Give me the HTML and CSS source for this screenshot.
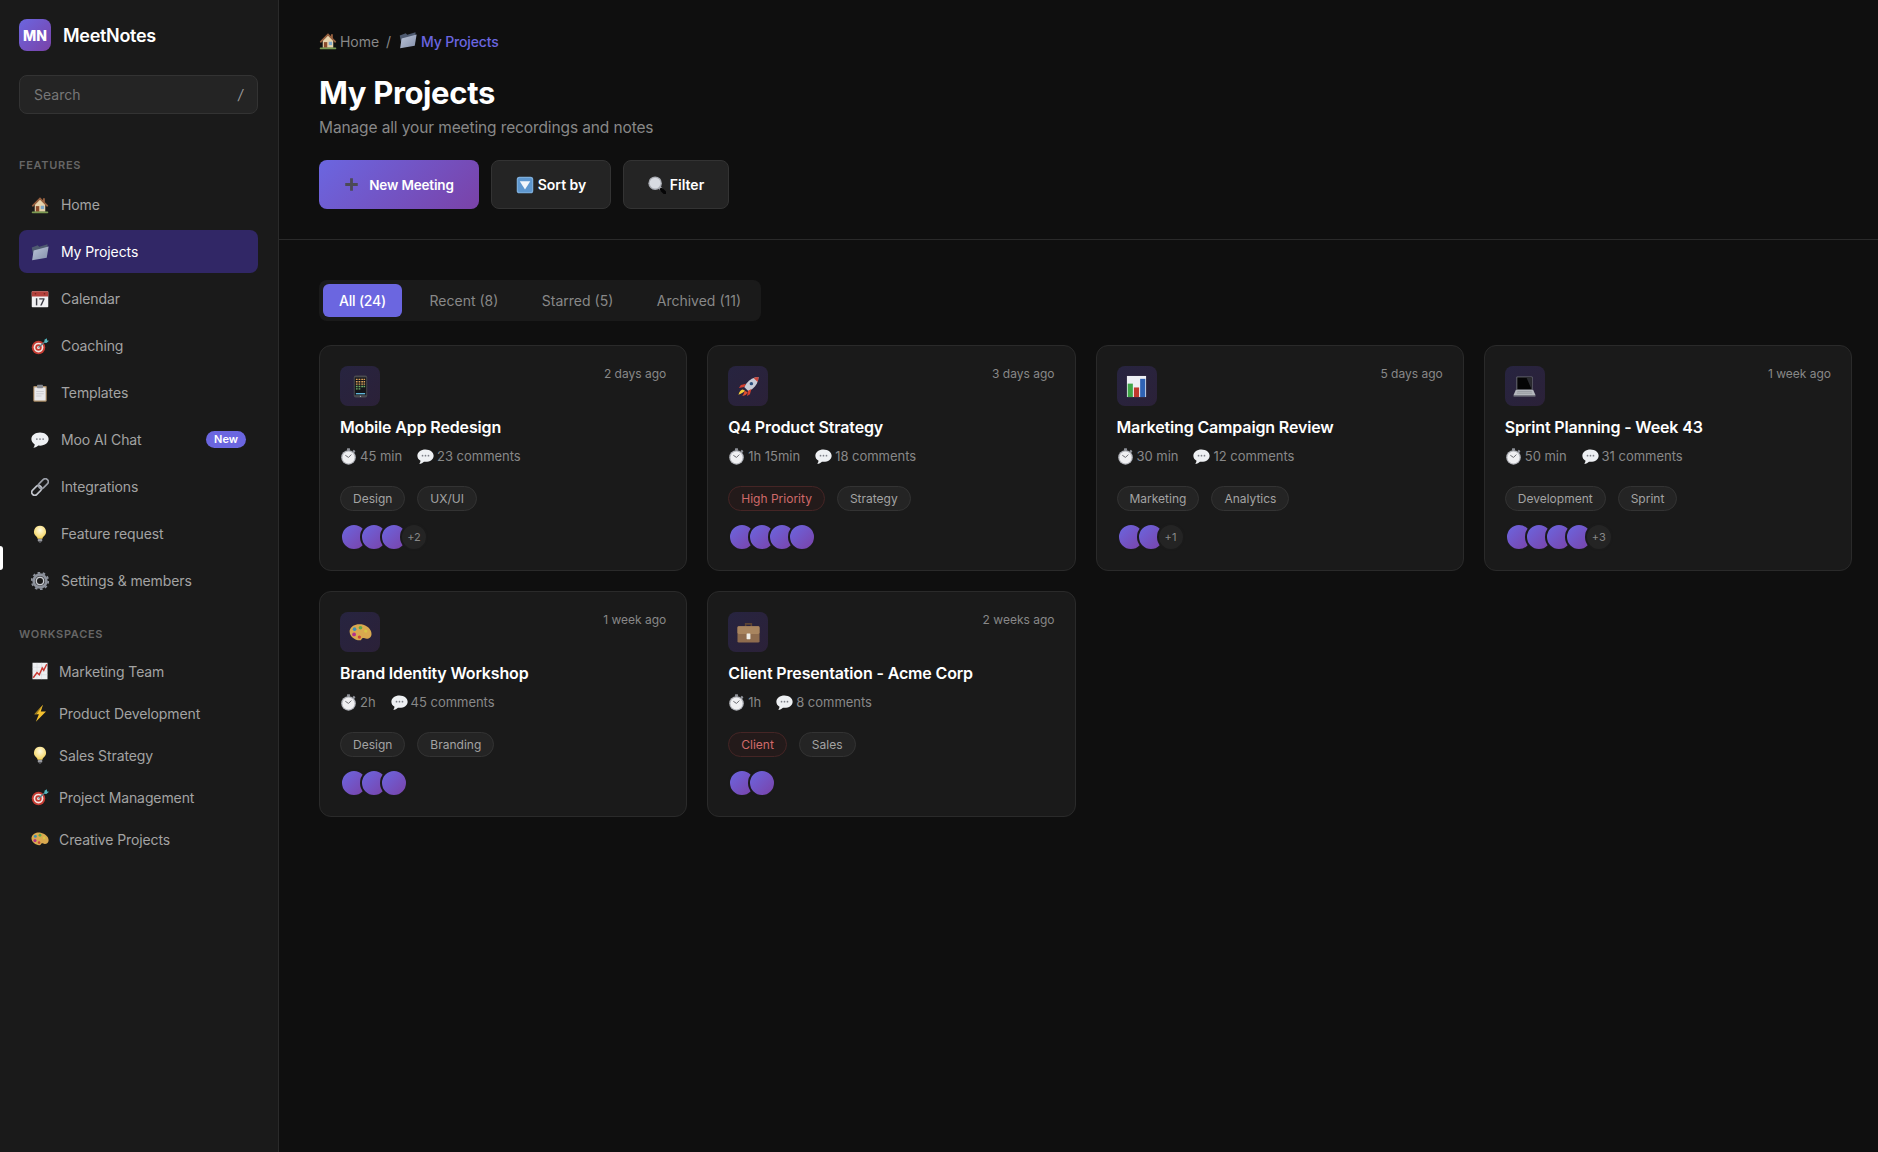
FILE: index.html
```html
<!DOCTYPE html>
<html lang="en">
<head>
    <meta charset="UTF-8">
    <meta name="viewport" content="width=device-width, initial-scale=1.0">
    <title>MeetNotes - My Projects</title>
    <link rel="stylesheet" href="styles.css">
</head>
<body>
    <!-- emoji style icons, reused with <use> -->
    <svg class="icon-defs" xmlns="http://www.w3.org/2000/svg">
        <defs>
            <linearGradient id="folderFront" x1="0" y1="0" x2="1" y2="1">
                <stop offset="0" stop-color="#bcc5d8"/>
                <stop offset="1" stop-color="#8490ab"/>
            </linearGradient>
            <radialGradient id="bulbGlow" cx="0.5" cy="0.35" r="0.6">
                <stop offset="0" stop-color="#fffbe0"/>
                <stop offset="1" stop-color="#f5d563"/>
            </radialGradient>
        </defs>
        <symbol id="i-home" viewBox="0 0 24 24">
            <path d="M5 11 12 4l7 7v10H5z" fill="#e6d3ac"/>
            <path d="M12 1.500 1 12.500 2.500 14.500 12 5l9.500 9.500 1.500-2z" fill="#96603f"/>
            <rect x="16" y="3" width="2.500" height="5" fill="#96603f"/>
            <rect x="6.500" y="13.500" width="4.500" height="7.500" fill="#8a4a2b"/>
            <rect x="13" y="13" width="4.500" height="4.500" fill="#7ea7c8"/>
            <rect x="1" y="20.500" width="22" height="2.500" rx="1" fill="#7c9a52"/>
        </symbol>
        <symbol id="i-folder" viewBox="0 0 24 24">
            <path d="M1 6 9 3l2 2 11-3.500V7L4 22z" fill="#4e5a70"/>
            <path d="M3.500 10 23.500 4.500 21 19.500 1.500 23z" fill="url(#folderFront)"/>
        </symbol>
        <symbol id="i-calendar" viewBox="0 0 24 24">
            <rect x="1" y="1.500" width="22" height="21.500" rx="1" fill="#f1f1f3"/>
            <path d="M1 2.500a1 1 0 0 1 1-1h20a1 1 0 0 1 1 1V8.500H1z" fill="#b3413c"/>
            <circle cx="6" cy="5" r="1.100" fill="#6e2320"/>
            <circle cx="18" cy="5" r="1.100" fill="#6e2320"/>
            <rect x="6.500" y="11" width="1.900" height="9.500" fill="#3c3c44"/>
            <path d="M11 11h7v1.700L14.300 20.500h-2.100l3.800-7.800h-5z" fill="#3c3c44"/>
        </symbol>
        <symbol id="i-target" viewBox="0 0 24 24">
            <circle cx="10" cy="14" r="9" fill="#c43b32"/>
            <circle cx="10" cy="14" r="6.500" fill="#f3e7e3"/>
            <circle cx="10" cy="14" r="4.300" fill="#c43b32"/>
            <circle cx="10" cy="14" r="2" fill="#f3e7e3"/>
            <path d="M10 14 20 5" stroke="#4d7f88" stroke-width="1.500"/>
            <path d="M18 3.500 21 1.500l.5 3L24 5 20.500 8l-2.500-.5z" fill="#55b5bd"/>
        </symbol>
        <symbol id="i-clipboard" viewBox="0 0 24 24">
            <rect x="3" y="2.500" width="18" height="21" rx="1.500" fill="#a88a63"/>
            <rect x="4.500" y="4.500" width="15" height="17.500" fill="#e9e9ec"/>
            <rect x="8" y="1" width="8" height="4.500" rx="1" fill="#85888f"/>
            <path d="M7 10h10M7 13h10M7 16h7" stroke="#c4c4ca" stroke-width="1"/>
        </symbol>
        <symbol id="i-chat" viewBox="0 0 24 24">
            <path d="M12 2C5.500 2 .5 5.800 .5 10.800c0 3 1.700 5.500 4.500 7.100-.1 1.500-.7 3.100-1.800 4.400 2.700-.2 5-1.400 6.600-3 .7.100 1.400.2 2.200.2 6.500 0 11.500-3.800 11.500-8.700S18.500 2 12 2z" fill="#eef0f3"/>
            <circle cx="7.800" cy="10.800" r="1.200" fill="#7c7f87"/>
            <circle cx="12" cy="10.800" r="1.200" fill="#7c7f87"/>
            <circle cx="16.200" cy="10.800" r="1.200" fill="#7c7f87"/>
        </symbol>
        <symbol id="i-link" viewBox="0 0 24 24">
            <rect x="0" y="12.500" width="15" height="8" rx="4" transform="rotate(-45 7.500 16.500)" fill="none" stroke="#c2c5cc" stroke-width="2.200"/>
            <rect x="9" y="3.500" width="15" height="8" rx="4" transform="rotate(-45 16.500 7.500)" fill="none" stroke="#9a9ea7" stroke-width="2.200"/>
        </symbol>
        <symbol id="i-bulb" viewBox="0 0 24 24">
            <path d="M12 1a8 8 0 0 0-4.800 14.400c1 .9 1.400 2 1.600 3h6.400c.2-1 .6-2.100 1.600-3A8 8 0 0 0 12 1z" fill="url(#bulbGlow)"/>
            <rect x="9" y="18.500" width="6" height="3.500" rx="1" fill="#9a9ba1"/>
            <rect x="10.500" y="22" width="3" height="1.500" rx=".7" fill="#5e5f65"/>
        </symbol>
        <symbol id="i-gear" viewBox="0 0 24 24">
            <circle cx="12" cy="12" r="8.500" fill="none" stroke="#8d929c" stroke-width="3.500"/>
            <circle cx="12" cy="12" r="11" fill="none" stroke="#8d929c" stroke-width="2.500" stroke-dasharray="3.400 3.500"/>
            <circle cx="12" cy="12" r="5" fill="none" stroke="#c6c9cf" stroke-width="2"/>
        </symbol>
        <symbol id="i-trend" viewBox="0 0 24 24">
            <rect x="2" y="1" width="20" height="22" fill="#eff0f2"/>
            <path d="M2 7h20M2 12h20M2 17h20M8 1v22M14 1v22" stroke="#d0d3d8" stroke-width=".6"/>
            <path d="M3 21l5-7 3 3 4-9 2 3 4-8" fill="none" stroke="#c9362f" stroke-width="1.900"/>
        </symbol>
        <symbol id="i-bolt" viewBox="0 0 24 24">
            <path d="M16 1 4.500 13.500h6L6.500 23.500 20 10h-7z" fill="#f3c02f"/>
            <path d="M16 1 4.500 13.500h3z" fill="#9c7a1c"/>
        </symbol>
        <symbol id="i-palette" viewBox="0 0 24 24">
            <path d="M.8 9.500C2 5 7.500 2.500 13 3.500s10.500 5 10.500 10c0 2.800-2.200 5-5 5-2.200 0-2.800-1.100-4.500-.6-1.100.4-.6 2.300-2.800 2.300C5.500 20.200-.4 15 .8 9.500z" fill="#d9a94f"/>
            <circle cx="5.800" cy="8.500" r="1.900" fill="#3f8fb5"/>
            <circle cx="12" cy="7" r="1.900" fill="#5ea84b"/>
            <circle cx="17.500" cy="10.500" r="1.700" fill="#d8c545"/>
            <circle cx="5.300" cy="14" r="2" fill="#b32f8b"/>
            <circle cx="10.800" cy="16.800" r="1.700" fill="#c9453b"/>
        </symbol>
        <symbol id="i-phone" viewBox="0 0 24 24">
            <rect x="5" y=".5" width="14" height="23" rx="2" fill="#4a4b50"/>
            <rect x="6" y="2.500" width="12" height="18.500" fill="#15161a"/>
            <path d="M7.200 4.500h1.800M10 4.500h1.800M12.800 4.500h1.800M15.200 4.500h1.600M7.200 7h1.800M10 7h1.800M12.800 7h1.800M15.200 7h1.600M7.200 9.500h1.800M10 9.500h1.800M12.800 9.500h1.800M15.200 9.500h1.600" stroke="#d9a05a" stroke-width="1.400"/>
            <path d="M7.200 12h1.800M10 12h1.800M12.800 12h1.800M15.200 12h1.600M7.200 14.500h1.800M10 14.500h1.800" stroke="#72b36b" stroke-width="1.400"/>
            <path d="M7.200 19.500h9.600" stroke="#5fb5d9" stroke-width="1.400"/>
            <circle cx="12" cy="22.300" r=".7" fill="#b5b6bb"/>
        </symbol>
        <symbol id="i-rocket" viewBox="0 0 24 24">
            <path d="M22.500 2c-5 .2-9.500 2.500-12.500 6.500l-2.500 4 4.500 4.500 4-2.500C20 11.500 22.300 7 22.500 2z" fill="#c7cbd6"/>
            <path d="M22.500 2c-1.800.1-3.500.4-5.200 1l4.200 4.200c.6-1.700.9-3.400 1-5.200z" fill="#c9453b"/>
            <circle cx="15" cy="9" r="1.800" fill="#2c4f7c"/>
            <path d="M9.500 9 4 10.500l-2 3 5.500-1zM15 14.500 13.500 20l-3 2 1-5.500z" fill="#d5402f"/>
            <path d="M6 15c-2 .5-3.500 2-4.500 5.500C5 19.500 7 18 8.500 16.500z" fill="#f6cf3c"/>
            <path d="M8 16.500c-.5 2-1 3.500-2.500 5.500 3-.5 5-2 5.500-4z" fill="#e0512f"/>
        </symbol>
        <symbol id="i-bars" viewBox="0 0 24 24">
            <rect x="2" y="1" width="20" height="22" fill="#eef0f5"/>
            <rect x="2.800" y="9" width="5.400" height="14" fill="#3fa648"/>
            <rect x="9.300" y="13" width="5.400" height="10" fill="#c03a2e"/>
            <rect x="15.800" y="4" width="5.400" height="19" fill="#2f63b5"/>
        </symbol>
        <symbol id="i-laptop" viewBox="0 0 24 24">
            <rect x="3.500" y="1.500" width="17" height="14" rx="1" fill="#6a6c72"/>
            <rect x="4.500" y="2.500" width="15" height="12.500" fill="#050506"/>
            <path d="M14 2.500h5.500V15z" fill="#2a2b30"/>
            <path d="M3 15.500h18l2.500 5.500H.5z" fill="#b4b7bd"/>
            <rect x=".5" y="21" width="23" height="1.500" rx=".7" fill="#85888f"/>
            <path d="M4.500 17.300h15M4 19h16" stroke="#85888f" stroke-width=".6"/>
        </symbol>
        <symbol id="i-case" viewBox="0 0 24 24">
            <path d="M9 6.500V3h6v3.500" fill="none" stroke="#5d4433" stroke-width="1.600"/>
            <rect x=".5" y="5.500" width="23" height="17" rx="1.500" fill="#8f6c4e"/>
            <rect x=".5" y="5.500" width="23" height="8" rx="1.500" fill="#a9855f"/>
            <rect x="10" y="13" width="4" height="6" rx=".5" fill="#f0eee8"/>
        </symbol>
        <symbol id="i-watch" viewBox="0 0 24 24">
            <rect x="9.800" y=".5" width="4.400" height="3" rx=".8" fill="#8d9097"/>
            <rect x="18" y="3" width="3.400" height="3" rx=".8" transform="rotate(45 19.700 4.500)" fill="#8d9097"/>
            <circle cx="12" cy="13.300" r="10.300" fill="#b3b5bb"/>
            <circle cx="12" cy="13.300" r="8.500" fill="#f0f0f2"/>
            <path d="M12 13.300 7.500 10.300M12 13.300l4-4" stroke="#55565c" stroke-width="1.200"/>
        </symbol>
        <symbol id="i-down" viewBox="0 0 24 24">
            <rect x="1" y="1" width="22" height="22" rx="3.500" fill="#7eaedb"/>
            <rect x="2.500" y="2.500" width="19" height="19" rx="2.500" fill="#5e97cf"/>
            <path d="M5 7h14l-7 11z" fill="#f2f6fb"/>
        </symbol>
        <symbol id="i-search" viewBox="0 0 24 24">
            <path d="M14 14 18.500 18.500" stroke="#a0a2a8" stroke-width="4.500"/>
            <path d="M18 18 22.500 22.500" stroke="#050506" stroke-width="4.500" stroke-linecap="round"/>
            <circle cx="9.500" cy="9.500" r="9" fill="#a9acb3"/>
            <circle cx="9.500" cy="9.500" r="7.300" fill="#d8dbe1"/>
        </symbol>
        <symbol id="i-plus" viewBox="0 0 24 24">
            <path d="M12 2v20M2 12h20" stroke="#4b4a55" stroke-width="4.500"/>
        </symbol>
    </svg>

    <div class="app">
        <aside class="sidebar">
            <div class="brand">
                <div class="brand-logo">MN</div>
                <span class="brand-name">MeetNotes</span>
            </div>
            <div class="search-box">
                <span>Search</span>
                <span class="search-key">/</span>
            </div>

            <div class="side-title first">Features</div>
            <nav class="nav-list">
                <a class="nav-item"><svg class="nav-icon"><use href="#i-home"/></svg>Home</a>
                <a class="nav-item active"><svg class="nav-icon"><use href="#i-folder"/></svg>My Projects</a>
                <a class="nav-item"><svg class="nav-icon"><use href="#i-calendar"/></svg>Calendar</a>
                <a class="nav-item"><svg class="nav-icon"><use href="#i-target"/></svg>Coaching</a>
                <a class="nav-item"><svg class="nav-icon"><use href="#i-clipboard"/></svg>Templates</a>
                <a class="nav-item"><svg class="nav-icon"><use href="#i-chat"/></svg>Moo AI Chat<span class="badge-new">New</span></a>
                <a class="nav-item"><svg class="nav-icon"><use href="#i-link"/></svg>Integrations</a>
                <a class="nav-item"><svg class="nav-icon"><use href="#i-bulb"/></svg>Feature request</a>
                <a class="nav-item"><svg class="nav-icon"><use href="#i-gear"/></svg>Settings &amp; members</a>
            </nav>

            <div class="side-title">Workspaces</div>
            <nav class="space-list">
                <a class="space-item"><svg class="nav-icon"><use href="#i-trend"/></svg>Marketing Team</a>
                <a class="space-item"><svg class="nav-icon"><use href="#i-bolt"/></svg>Product Development</a>
                <a class="space-item"><svg class="nav-icon"><use href="#i-bulb"/></svg>Sales Strategy</a>
                <a class="space-item"><svg class="nav-icon"><use href="#i-target"/></svg>Project Management</a>
                <a class="space-item"><svg class="nav-icon"><use href="#i-palette"/></svg>Creative Projects</a>
            </nav>
            <div class="side-handle"></div>
        </aside>

        <main class="main">
            <header class="page-header">
                <div class="breadcrumb">
                    <svg class="crumb-icon first"><use href="#i-home"/></svg>
                    <span>Home</span>
                    <span class="crumb-sep">/</span>
                    <svg class="crumb-icon raised"><use href="#i-folder"/></svg>
                    <span class="crumb-current">My Projects</span>
                </div>
                <h1>My Projects</h1>
                <p class="subtitle">Manage all your meeting recordings and notes</p>
                <div class="actions">
                    <button class="btn btn-primary"><svg class="btn-plus"><use href="#i-plus"/></svg>New Meeting</button>
                    <button class="btn btn-sort"><svg class="btn-icon"><use href="#i-down"/></svg>Sort by</button>
                    <button class="btn btn-filter"><svg class="btn-icon"><use href="#i-search"/></svg>Filter</button>
                </div>
            </header>

            <section class="content">
                <div class="tabs">
                    <div class="tab active">All (24)</div>
                    <div class="tab">Recent (8)</div>
                    <div class="tab">Starred (5)</div>
                    <div class="tab">Archived (11)</div>
                </div>

                <div class="card-grid">
                    <article class="card">
                        <div class="card-top">
                            <div class="card-icon"><svg><use href="#i-phone"/></svg></div>
                            <span class="card-time">2 days ago</span>
                        </div>
                        <h3>Mobile App Redesign</h3>
                        <div class="meta">
                            <span class="meta-item"><svg><use href="#i-watch"/></svg>45 min</span>
                            <span class="meta-item"><svg><use href="#i-chat"/></svg>23 comments</span>
                        </div>
                        <div class="tags">
                            <span class="tag">Design</span>
                            <span class="tag">UX/UI</span>
                        </div>
                        <div class="avatars">
                            <span class="avatar"></span><span class="avatar"></span><span class="avatar"></span><span class="avatar more">+2</span>
                        </div>
                    </article>

                    <article class="card">
                        <div class="card-top">
                            <div class="card-icon"><svg><use href="#i-rocket"/></svg></div>
                            <span class="card-time">3 days ago</span>
                        </div>
                        <h3>Q4 Product Strategy</h3>
                        <div class="meta">
                            <span class="meta-item"><svg><use href="#i-watch"/></svg>1h 15min</span>
                            <span class="meta-item"><svg><use href="#i-chat"/></svg>18 comments</span>
                        </div>
                        <div class="tags">
                            <span class="tag tag-red">High Priority</span>
                            <span class="tag">Strategy</span>
                        </div>
                        <div class="avatars">
                            <span class="avatar"></span><span class="avatar"></span><span class="avatar"></span><span class="avatar"></span>
                        </div>
                    </article>

                    <article class="card">
                        <div class="card-top">
                            <div class="card-icon"><svg><use href="#i-bars"/></svg></div>
                            <span class="card-time">5 days ago</span>
                        </div>
                        <h3>Marketing Campaign Review</h3>
                        <div class="meta">
                            <span class="meta-item"><svg><use href="#i-watch"/></svg>30 min</span>
                            <span class="meta-item"><svg><use href="#i-chat"/></svg>12 comments</span>
                        </div>
                        <div class="tags">
                            <span class="tag">Marketing</span>
                            <span class="tag">Analytics</span>
                        </div>
                        <div class="avatars">
                            <span class="avatar"></span><span class="avatar"></span><span class="avatar more">+1</span>
                        </div>
                    </article>

                    <article class="card">
                        <div class="card-top">
                            <div class="card-icon"><svg><use href="#i-laptop"/></svg></div>
                            <span class="card-time">1 week ago</span>
                        </div>
                        <h3>Sprint Planning - Week 43</h3>
                        <div class="meta">
                            <span class="meta-item"><svg><use href="#i-watch"/></svg>50 min</span>
                            <span class="meta-item"><svg><use href="#i-chat"/></svg>31 comments</span>
                        </div>
                        <div class="tags">
                            <span class="tag">Development</span>
                            <span class="tag">Sprint</span>
                        </div>
                        <div class="avatars">
                            <span class="avatar"></span><span class="avatar"></span><span class="avatar"></span><span class="avatar"></span><span class="avatar more">+3</span>
                        </div>
                    </article>

                    <article class="card">
                        <div class="card-top">
                            <div class="card-icon"><svg><use href="#i-palette"/></svg></div>
                            <span class="card-time">1 week ago</span>
                        </div>
                        <h3>Brand Identity Workshop</h3>
                        <div class="meta">
                            <span class="meta-item"><svg><use href="#i-watch"/></svg>2h</span>
                            <span class="meta-item"><svg><use href="#i-chat"/></svg>45 comments</span>
                        </div>
                        <div class="tags">
                            <span class="tag">Design</span>
                            <span class="tag">Branding</span>
                        </div>
                        <div class="avatars">
                            <span class="avatar"></span><span class="avatar"></span><span class="avatar"></span>
                        </div>
                    </article>

                    <article class="card">
                        <div class="card-top">
                            <div class="card-icon"><svg><use href="#i-case"/></svg></div>
                            <span class="card-time">2 weeks ago</span>
                        </div>
                        <h3>Client Presentation - Acme Corp</h3>
                        <div class="meta">
                            <span class="meta-item"><svg><use href="#i-watch"/></svg>1h</span>
                            <span class="meta-item"><svg><use href="#i-chat"/></svg>8 comments</span>
                        </div>
                        <div class="tags">
                            <span class="tag tag-red">Client</span>
                            <span class="tag">Sales</span>
                        </div>
                        <div class="avatars">
                            <span class="avatar"></span><span class="avatar"></span>
                        </div>
                    </article>
                </div>
            </section>
        </main>
    </div>
</body>
</html>
```

FILE: styles.css
```css
* {
    box-sizing: border-box;
}

body {
    margin: 0;
    font-family: 'Inter', 'Liberation Sans', sans-serif;
    background-color: #0f0f0f;
    color: #fff;
}

.icon-defs {
    position: absolute;
    width: 0;
    height: 0;
}

.app {
    display: flex;
    min-height: 100vh;
}

/* sidebar */
.sidebar {
    position: relative;
    width: 279px;
    flex-shrink: 0;
    padding: 19px 20px 19px 19px;
    background-color: #1a1a1a;
    border-right: 1px solid #2a2a2a;
}

.brand {
    display: flex;
    align-items: center;
    gap: 12px;
    margin-bottom: 24px;
}

.brand-logo {
    display: flex;
    align-items: center;
    justify-content: center;
    width: 32px;
    height: 32px;
    border-radius: 8px;
    background: linear-gradient(135deg, #6b66e0, #7a42a8);
    font-size: 14px;
    font-weight: 800;
}

.brand-name {
    font-size: 18px;
    font-weight: 600;
    letter-spacing: -0.3px;
}

.search-box {
    display: flex;
    align-items: center;
    justify-content: space-between;
    height: 39px;
    padding: 0 14px;
    background-color: #242424;
    border: 1px solid #333;
    border-radius: 8px;
    font-size: 14px;
    color: #777;
}

.search-key {
    color: #999;
    font-style: italic;
}

.side-title {
    margin: 25px 0 11px;
    font-size: 11px;
    line-height: 14px;
    font-weight: 600;
    letter-spacing: 0.7px;
    text-transform: uppercase;
    color: #666;
}

.side-title.first {
    margin: 44px 0 11px;
}

.nav-item {
    display: flex;
    align-items: center;
    gap: 12px;
    height: 43px;
    margin-bottom: 4px;
    padding: 0 12px;
    border-radius: 8px;
    font-size: 14px;
    letter-spacing: -0.1px;
    color: #a3a3a3;
}

.nav-item.active {
    background-color: #312766;
    color: #fff;
}

.nav-icon {
    width: 18px;
    height: 18px;
    flex-shrink: 0;
}

.badge-new {
    margin-left: auto;
    padding: 1px 8px;
    border-radius: 10px;
    background-color: #6b66e0;
    font-size: 11px;
    line-height: 15px;
    font-weight: 600;
    letter-spacing: 0;
    color: #fff;
}

.space-item {
    display: flex;
    align-items: center;
    gap: 10px;
    height: 38px;
    margin-bottom: 4px;
    padding: 0 12px;
    font-size: 14px;
    letter-spacing: -0.1px;
    color: #a3a3a3;
}

.side-handle {
    position: absolute;
    left: 0;
    top: 546px;
    width: 3px;
    height: 24px;
    background-color: #fff;
    border-radius: 0 3px 3px 0;
}

/* main area */
.main {
    flex: 1;
    min-width: 0;
}

.page-header {
    height: 240px;
    padding: 31px 26px 0 40px;
    border-bottom: 1px solid #2a2a2a;
}

.breadcrumb {
    display: flex;
    align-items: center;
    height: 20px;
    font-size: 14px;
    letter-spacing: -0.05px;
    color: #888;
}

.crumb-icon {
    width: 18px;
    height: 18px;
    margin-right: 4px;
}

.crumb-icon.first {
    margin-right: 3px;
}

.crumb-icon.raised {
    margin-top: -3px;
}

.crumb-sep {
    margin: 0 8px 0 7px;
}

.crumb-current {
    color: #6b66e0;
    font-weight: 500;
    letter-spacing: -0.15px;
}

.page-header h1 {
    margin: 22px 0 0;
    font-size: 31px;
    line-height: 40px;
    font-weight: 700;
    letter-spacing: -0.35px;
}

.subtitle {
    margin: 4px 0 0;
    font-size: 15.5px;
    line-height: 22px;
    letter-spacing: -0.12px;
    color: #888;
}

.actions {
    display: flex;
    gap: 12px;
    margin-top: 21px;
}

.btn {
    display: flex;
    align-items: center;
    justify-content: center;
    height: 49px;
    border-radius: 8px;
    font-family: inherit;
    font-size: 14px;
    font-weight: 600;
    color: #fff;
}

.btn-primary {
    width: 160px;
    gap: 10px;
    border: none;
    background: linear-gradient(135deg, #6b66e0, #7a42a8);
    font-size: 13.5px;
    letter-spacing: -0.15px;
}

.btn-plus {
    width: 15px;
    height: 15px;
}

.btn-sort,
.btn-filter {
    gap: 4px;
    padding-top: 1px;
    background-color: #242424;
    border: 1px solid #333;
}

.btn-sort {
    width: 120px;
}

.btn-filter {
    width: 106px;
}

.btn-icon {
    width: 18px;
    height: 18px;
}

.content {
    padding: 40px 26px 40px 40px;
}

.tabs {
    display: inline-flex;
    gap: 11.5px;
    height: 41px;
    padding: 4px;
    background-color: #1a1a1a;
    border-radius: 8px;
}

.tab {
    display: flex;
    align-items: center;
    height: 33px;
    padding: 0 16px;
    border-radius: 6px;
    font-size: 14px;
    color: #888;
}

.tab.active {
    background-color: #6b66e0;
    color: #fff;
    font-weight: 500;
    letter-spacing: -0.2px;
}

.card-grid {
    display: grid;
    grid-template-columns: repeat(4, 1fr);
    gap: 20px;
    margin-top: 24px;
}

.card {
    height: 226px;
    padding: 20px;
    background-color: #1a1a1a;
    border: 1px solid #2a2a2a;
    border-radius: 12px;
}

.card-top {
    display: flex;
    align-items: flex-start;
    justify-content: space-between;
}

.card-icon {
    display: flex;
    align-items: center;
    justify-content: center;
    width: 40px;
    height: 40px;
    border-radius: 8px;
    background: linear-gradient(135deg, #272440, #2b2138);
}

.card-icon svg {
    width: 23px;
    height: 23px;
}

.card-time {
    font-size: 12px;
    line-height: 16px;
    color: #888;
}

.card h3 {
    margin: 11px 0 0;
    font-size: 16px;
    line-height: 20px;
    font-weight: 600;
    letter-spacing: -0.15px;
}

.meta {
    display: flex;
    gap: 15px;
    margin-top: 10px;
    font-size: 13px;
    line-height: 18px;
    letter-spacing: -0.02px;
    color: #888;
}

.meta-item {
    display: flex;
    align-items: center;
    gap: 3px;
}

.meta-item svg {
    width: 17px;
    height: 17px;
}

.tags {
    display: flex;
    gap: 12px;
    margin-top: 21px;
}

.tag {
    padding: 4px 12px;
    border: 1px solid #333;
    border-radius: 13px;
    background-color: #242424;
    font-size: 12px;
    line-height: 15px;
    color: #a3a3a3;
}

.tag-red {
    background-color: #231a1a;
    border-color: #452525;
    color: #d06a6a;
}

.avatars {
    display: flex;
    margin-top: 12px;
}

.avatar {
    width: 28px;
    height: 28px;
    margin-right: -8px;
    border: 2px solid #1a1a1a;
    border-radius: 50%;
    background: linear-gradient(135deg, #6b66e0, #7a42a8);
}

.avatar.more {
    display: flex;
    align-items: center;
    justify-content: center;
    background: #242424;
    font-size: 11px;
    color: #888;
}
```
